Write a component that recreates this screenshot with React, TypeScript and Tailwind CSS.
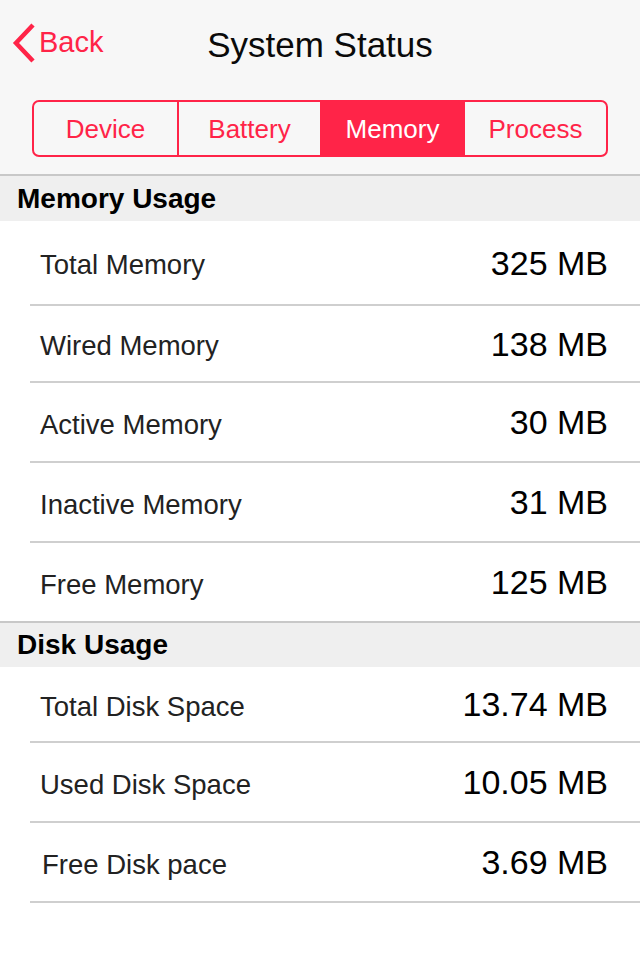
import React from 'react';

type Row = { label: string; value: string; h: string; indent?: boolean; line?: boolean };

const memoryRows: Row[] = [
  { label: 'Total Memory', value: '325 MB', h: 'h-[85px]', line: true },
  { label: 'Wired Memory', value: '138 MB', h: 'h-[77px]', line: true },
  { label: 'Active Memory', value: '30 MB', h: 'h-[80px]', line: true },
  { label: 'Inactive Memory', value: '31 MB', h: 'h-[80px]', line: true },
  { label: 'Free Memory', value: '125 MB', h: 'h-[78px]' },
];

const diskRows: Row[] = [
  { label: 'Total Disk Space', value: '13.74 MB', h: 'h-[76px]', line: true },
  { label: 'Used Disk Space', value: '10.05 MB', h: 'h-[80px]', line: true },
  { label: 'Free Disk pace', value: '3.69 MB', h: 'h-[80px]', line: true, indent: true },
];

const tabs = ['Device', 'Battery', 'Memory', 'Process'];

const SectionHeader: React.FC<{ title: string; h: string }> = ({ title, h }) => (
  <div className={`${h} border-t-2 border-[#c8c8c8] bg-[#efefef] pl-[17px] flex items-center`}>
    <span className="text-[28px] font-bold text-black leading-none">{title}</span>
  </div>
);

const ListRow: React.FC<{ row: Row }> = ({ row }) => (
  <div className="pl-[30px]">
    <div
      className={`${row.h} flex items-center justify-between pr-[32px] ${
        row.line ? 'border-b-2 border-[#cfcfcf]' : ''
      }`}
    >
      <span
        className={`text-[27.5px] text-[#222] leading-none mt-[5px] ${row.indent ? 'pl-[12px]' : 'pl-[10px]'}`}
      >
        {row.label}
      </span>
      <span className="text-[34px] text-black leading-none">{row.value}</span>
    </div>
  </div>
);

const App: React.FC = () => {
  return (
    <div className="w-[640px] h-[960px] bg-white flex flex-col font-['Liberation_Sans',Arial,sans-serif]">
      <div className="bg-[#f7f7f7] pb-[17px]">
        <div className="h-[88px] grid grid-cols-[1fr_auto_1fr] items-center">
          <div className="flex items-center pl-[12px] mb-[3px]">
            <svg width="24" height="42" viewBox="0 0 24 42" className="shrink-0">
              <polyline points="21,3 4,21 21,39" fill="none" stroke="#ff2448" strokeWidth="4.5" />
            </svg>
            <span className="ml-[3px] text-[29px] text-[#ff2448] leading-none">Back</span>
          </div>
          <h1 className="text-[35px] text-[#0a0a0a] leading-none">System Status</h1>
          <div />
        </div>
        <div className="mt-[12px] mx-[32px] h-[57px] grid grid-cols-4 border-2 border-[#ff2448] rounded-[7px] overflow-hidden">
          {tabs.map((t, i) => (
            <div
              key={t}
              className={`flex items-center justify-center text-[26px] leading-none ${
                i > 0 ? 'border-l-2 border-[#ff2448]' : ''
              } ${t === 'Memory' ? 'bg-[#ff2448] text-white' : 'text-[#ff2448]'}`}
            >
              {t}
            </div>
          ))}
        </div>
      </div>

      <SectionHeader title="Memory Usage" h="h-[47px]" />
      {memoryRows.map((r) => (
        <ListRow key={r.label} row={r} />
      ))}

      <SectionHeader title="Disk Usage" h="h-[46px]" />
      {diskRows.map((r) => (
        <ListRow key={r.label} row={r} />
      ))}
    </div>
  );
};

export default App;
